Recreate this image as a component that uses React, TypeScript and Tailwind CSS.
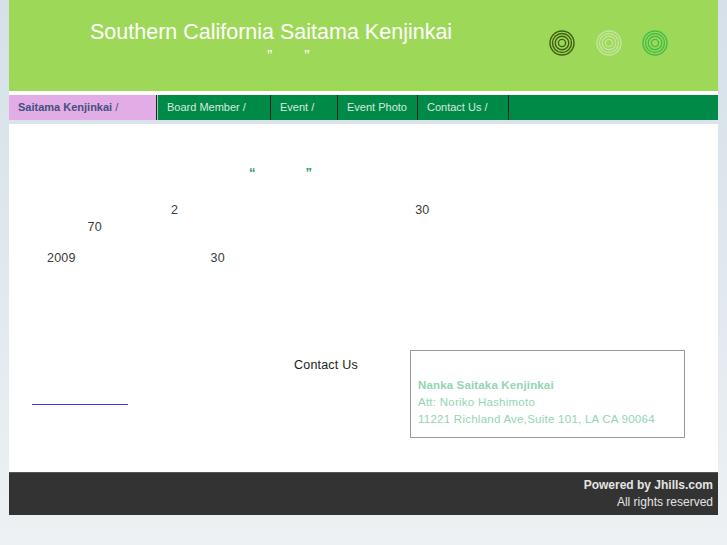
export default function App() {
  const circles = [
    { c: "#3f5f14" },
    { c: "#c4e6a0" },
    { c: "#45bd4a" },
  ];
  return (
    <div className="h-[545px] w-[727px] overflow-hidden bg-gradient-to-b from-[#d5e0e8] to-[#edf1f4] px-[9px] font-['Liberation_Sans',Arial,sans-serif]">
      <header className="flex h-[91px] w-[709px] bg-[#9ed858]">
        <div className="ml-[81px] w-[362px] pt-[20px] text-center text-white">
          <h1 className="text-[21.5px] leading-[25px] whitespace-nowrap">Southern California Saitama Kenjinkai</h1>
          <div className="mt-[3px] flex gap-[32px] pl-[177px] text-[16px] leading-[18px]">
            <span>”</span>
            <span>”</span>
          </div>
        </div>
        <div className="ml-[97px] flex gap-[20.5px] pt-[30px]">
          {circles.map((x, i) => (
            <svg key={i} width="26" height="26" viewBox="0 0 26 26" fill="none" stroke={x.c} strokeWidth="1.4">
              <circle cx="13" cy="13" r="12" />
              <circle cx="13" cy="13" r="9.5" />
              <circle cx="13" cy="13" r="6.8" />
              <circle cx="13" cy="13" r="3.6" />
            </svg>
          ))}
        </div>
      </header>
      <div className="h-[4px] w-[709px] bg-white" />
      <nav className="flex h-[25px] w-[709px] bg-[#008a48] text-[11px] leading-[25px] text-[#d8eadf]">
        <div className="w-[148px] border-r border-[#222] bg-[#e2ace6] pl-[9px] font-bold text-[#44507f]">
          Saitama Kenjinkai <span className="font-normal">/</span>
        </div>
        <div className="w-[114px] border-r border-[#222] border-l border-l-white/60 pl-[9px]">Board Member /</div>
        <div className="w-[67px] border-r border-[#222] pl-[9px]">Event /</div>
        <div className="w-[80px] border-r border-[#222] pl-[9px]">Event Photo</div>
        <div className="w-[91px] border-r border-[#222] pl-[9px]">Contact Us /</div>
      </nav>
      <main className="mt-[4px] h-[348px] w-[709px] bg-white text-[#3a3a3a]">
        <div className="flex gap-[50px] pl-[240px] pt-[41px] text-[13px] leading-[15px] font-bold text-[#1f9a60]">
          <span>“</span>
          <span>”</span>
        </div>
        <p className="mt-[22px] flex text-[12.5px] leading-[17px] tracking-[0.2px]">
          <span className="ml-[162px]">2</span>
          <span className="ml-[237px]">30</span>
        </p>
        <p className="pl-[78.5px] text-[12.5px] leading-[17px] tracking-[0.2px]">70</p>
        <p className="mt-[14px] flex text-[12.5px] leading-[17px] tracking-[0.2px]">
          <span className="ml-[38px]">2009</span>
          <span className="ml-[135px]">30</span>
        </p>
        <div className="mt-[83px] flex">
          <div className="w-[401px]">
            <div className="pl-[285px] pt-[8px] text-[12.5px] leading-[15px] tracking-[0.2px] text-[#222]">Contact Us</div>
            <div className="ml-[23px] mt-[31px] h-px w-[96px] bg-[#3a3af0]" />
          </div>
          <div className="h-[88px] w-[275px] border border-[#999] px-[7px] pt-[26px] text-[11.5px] leading-[17px] tracking-[0.25px] text-[#93d5b2]">
            <div className="font-bold tracking-[0.15px]">Nanka Saitaka Kenjinkai</div>
            <div>Att: Noriko Hashimoto</div>
            <div className="whitespace-nowrap">11221 Richland Ave,Suite 101, LA CA 90064</div>
          </div>
        </div>
      </main>
      <footer className="h-[43px] w-[709px] border-t border-[#555] bg-[#333] pr-[5px] pt-[4px] text-right text-[12px] leading-[17px] text-[#e4e4e4]">
        <div className="font-bold">Powered by Jhills.com</div>
        <div>All rights reserved</div>
      </footer>
    </div>
  );
}
